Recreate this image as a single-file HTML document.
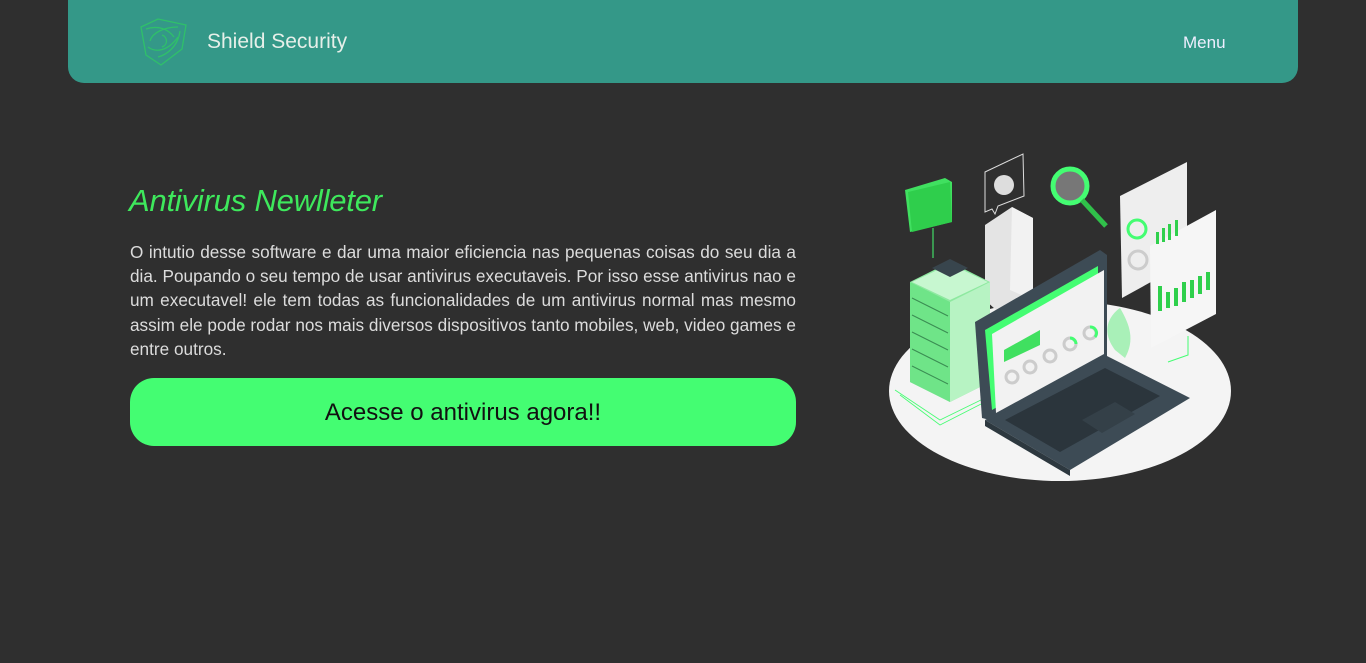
<!DOCTYPE html>
<html><head><meta charset="utf-8"><style>
*{margin:0;padding:0;box-sizing:border-box}
body{width:1366px;height:663px;background:#2f2f2f;font-family:"Liberation Sans",sans-serif;overflow:hidden;position:relative}
.nav{position:absolute;left:68px;top:0;width:1230px;height:83px;background:#349888;border-radius:0 0 16px 16px}
.brand{position:absolute;top:30px;color:#e6efe9;font-size:21px;left:207px}
.menu{position:absolute;left:1183px;top:33px;color:#eef;font-size:17px}
h1{position:absolute;left:129px;top:183px;font-size:31px;font-style:italic;font-weight:normal;color:#3ee85c;letter-spacing:-0.2px}
p{position:absolute;left:130px;top:240px;width:666px;color:#dcdcdc;font-size:17.2px;line-height:24.2px;text-align:justify}
.btn{position:absolute;left:130px;top:378px;width:666px;height:68px;background:#44fd72;border-radius:24px;text-align:center;line-height:70px;font-size:24px;color:#111}
</style></head><body>
<div class="nav">
<svg style="position:absolute;left:70px;top:17px" width="52" height="50" viewBox="0 0 52 50" fill="none" stroke="#2fc06a" stroke-width="1.3">
<path d="M3 10 L20 2 L48 8 L44 32 L23 48 L8 38 Z"/>
<path d="M8 12 C20 8 30 12 36 20 M12 24 C14 16 26 10 40 10 M10 30 C18 36 30 34 40 20 M20 40 C28 38 40 30 42 14 M24 18 C30 20 30 28 24 30"/>
</svg>
</div>
<div class="brand">Shield Security</div>
<div class="menu">Menu</div>
<h1>Antivirus Newlleter</h1>
<p>O intutio desse software e dar uma maior eficiencia nas pequenas coisas do seu dia a dia. Poupando o seu tempo de usar antivirus executaveis. Por isso esse antivirus nao e um executavel! ele tem todas as funcionalidades de um antivirus normal mas mesmo assim ele pode rodar nos mais diversos dispositivos tanto mobiles, web, video games e entre outros.</p>
<div class="btn">Acesse o antivirus agora!!</div>
<svg style="position:absolute;left:0;top:0" width="1366" height="663" viewBox="0 0 1366 663">
<ellipse cx="1060" cy="391" rx="171" ry="90" fill="#f4f4f4"/>
<g stroke="#44fd72" fill="none" stroke-width="0.8"><path d="M895 390 L940 420 L985 398 M900 395 L940 425 L985 402"/></g>
<path d="M985 225 L1012 207 L1033 218 L1033 300 L1005 318 L985 300 Z" fill="#e4e4e4"/>
<path d="M1012 207 L1033 218 L1033 300 L1010 290 Z" fill="#f2f2f2"/>
<g>
<path d="M910 282 L950 262 L990 282 L990 382 L950 402 L910 382 Z" fill="#8ee9a0"/>
<path d="M950 302 L990 282 L990 382 L950 402 Z" fill="#b7f3c3"/>
<path d="M910 282 L950 302 L950 402 L910 382 Z" fill="#6fe488"/>
<path d="M912 282 L950 264 L988 282 L950 300 Z" fill="#c7f7d0"/>
<path d="M932 268 L950 259 L968 268 L950 277 Z" fill="#38454d"/>
<g stroke="#3a8c52" stroke-width="1">
<path d="M912 298 L948 316 M912 315 L948 333 M912 332 L948 350 M912 349 L948 367 M912 366 L948 384"/></g>
</g>
<path d="M905 190 L945 178 L952 182 L952 222 L910 232 Z" fill="#40e060"/>
<path d="M908 192 L950 182 L952 222 L912 232 Z" fill="#2fce4c"/>
<line x1="933" y1="228" x2="933" y2="258" stroke="#44fd72"/>
<path d="M985 172 L1023 154 L1024 196 L998 206 L995 214 L992 209 L985 212 Z" fill="#2f2f2f" stroke="#ddd" stroke-width="1"/>
<circle cx="1004" cy="185" r="10" fill="#ddd"/>
<circle cx="1070" cy="186" r="17" fill="#777" stroke="#44fd72" stroke-width="5"/>
<line x1="1082" y1="200" x2="1106" y2="226" stroke="#30c04a" stroke-width="5"/>
<path d="M1120 196 L1187 162 L1187 262 L1122 298 Z" fill="#eee"/>
<path d="M1150 246 L1216 210 L1216 314 L1151 348 Z" fill="#f6f6f6"/>
<circle cx="1137" cy="229" r="9" fill="none" stroke="#44fd72" stroke-width="3"/>
<circle cx="1138" cy="260" r="9" fill="none" stroke="#ccc" stroke-width="3"/>
<g fill="#2fd04c"><rect x="1158" y="286" width="4" height="25"/><rect x="1166" y="292" width="4" height="16"/><rect x="1174" y="288" width="4" height="18"/><rect x="1182" y="282" width="4" height="20"/><rect x="1190" y="280" width="4" height="18"/><rect x="1198" y="276" width="4" height="18"/><rect x="1206" y="272" width="4" height="18"/>
<rect x="1156" y="232" width="3" height="12"/><rect x="1162" y="228" width="3" height="14"/><rect x="1168" y="224" width="3" height="16"/><rect x="1175" y="220" width="3" height="16"/></g>
<path d="M1188 336 L1188 355 L1168 362" stroke="#44fd72" fill="none"/>
<path d="M1115 350 C1100 330 1110 315 1120 308 C1130 325 1135 340 1125 358 Z" fill="#a9f0b8"/>
<path d="M985 420 L1105 355 L1190 398 L1070 470 Z" fill="#3d4b55"/>
<path d="M985 420 L1070 470 L1070 476 L985 426 Z" fill="#2d383f"/>
<path d="M1005 420 L1105 368 L1160 396 L1060 452 Z" fill="#2b353c"/>
<path d="M1082 420 L1115 402 L1135 414 L1102 433 Z" fill="#344048"/>
<path d="M975 322 L1100 250 L1107 255 L1107 356 L990 420 L982 418 Z" fill="#3d4b55"/>
<path d="M985 330 L1098 266 L1098 350 L992 410 Z" fill="#44fd72"/>
<path d="M992 334 L1104 270 L1104 354 L996 413 Z" fill="#f2f2f2"/>
<path d="M1004 350 L1040 330 L1040 345 L1004 362 Z" fill="#40e060"/>
<g fill="none" stroke="#ccc" stroke-width="3"><circle cx="1012" cy="377" r="6"/><circle cx="1030" cy="367" r="6"/><circle cx="1050" cy="356" r="6"/><circle cx="1070" cy="344" r="6"/><circle cx="1090" cy="333" r="6"/></g>
<g fill="none" stroke="#44fd72" stroke-width="3"><path d="M1070 338 A6 6 0 0 1 1076 344"/><path d="M1090 327 A6 6 0 0 1 1095 337"/></g>
</svg>
</body></html>
